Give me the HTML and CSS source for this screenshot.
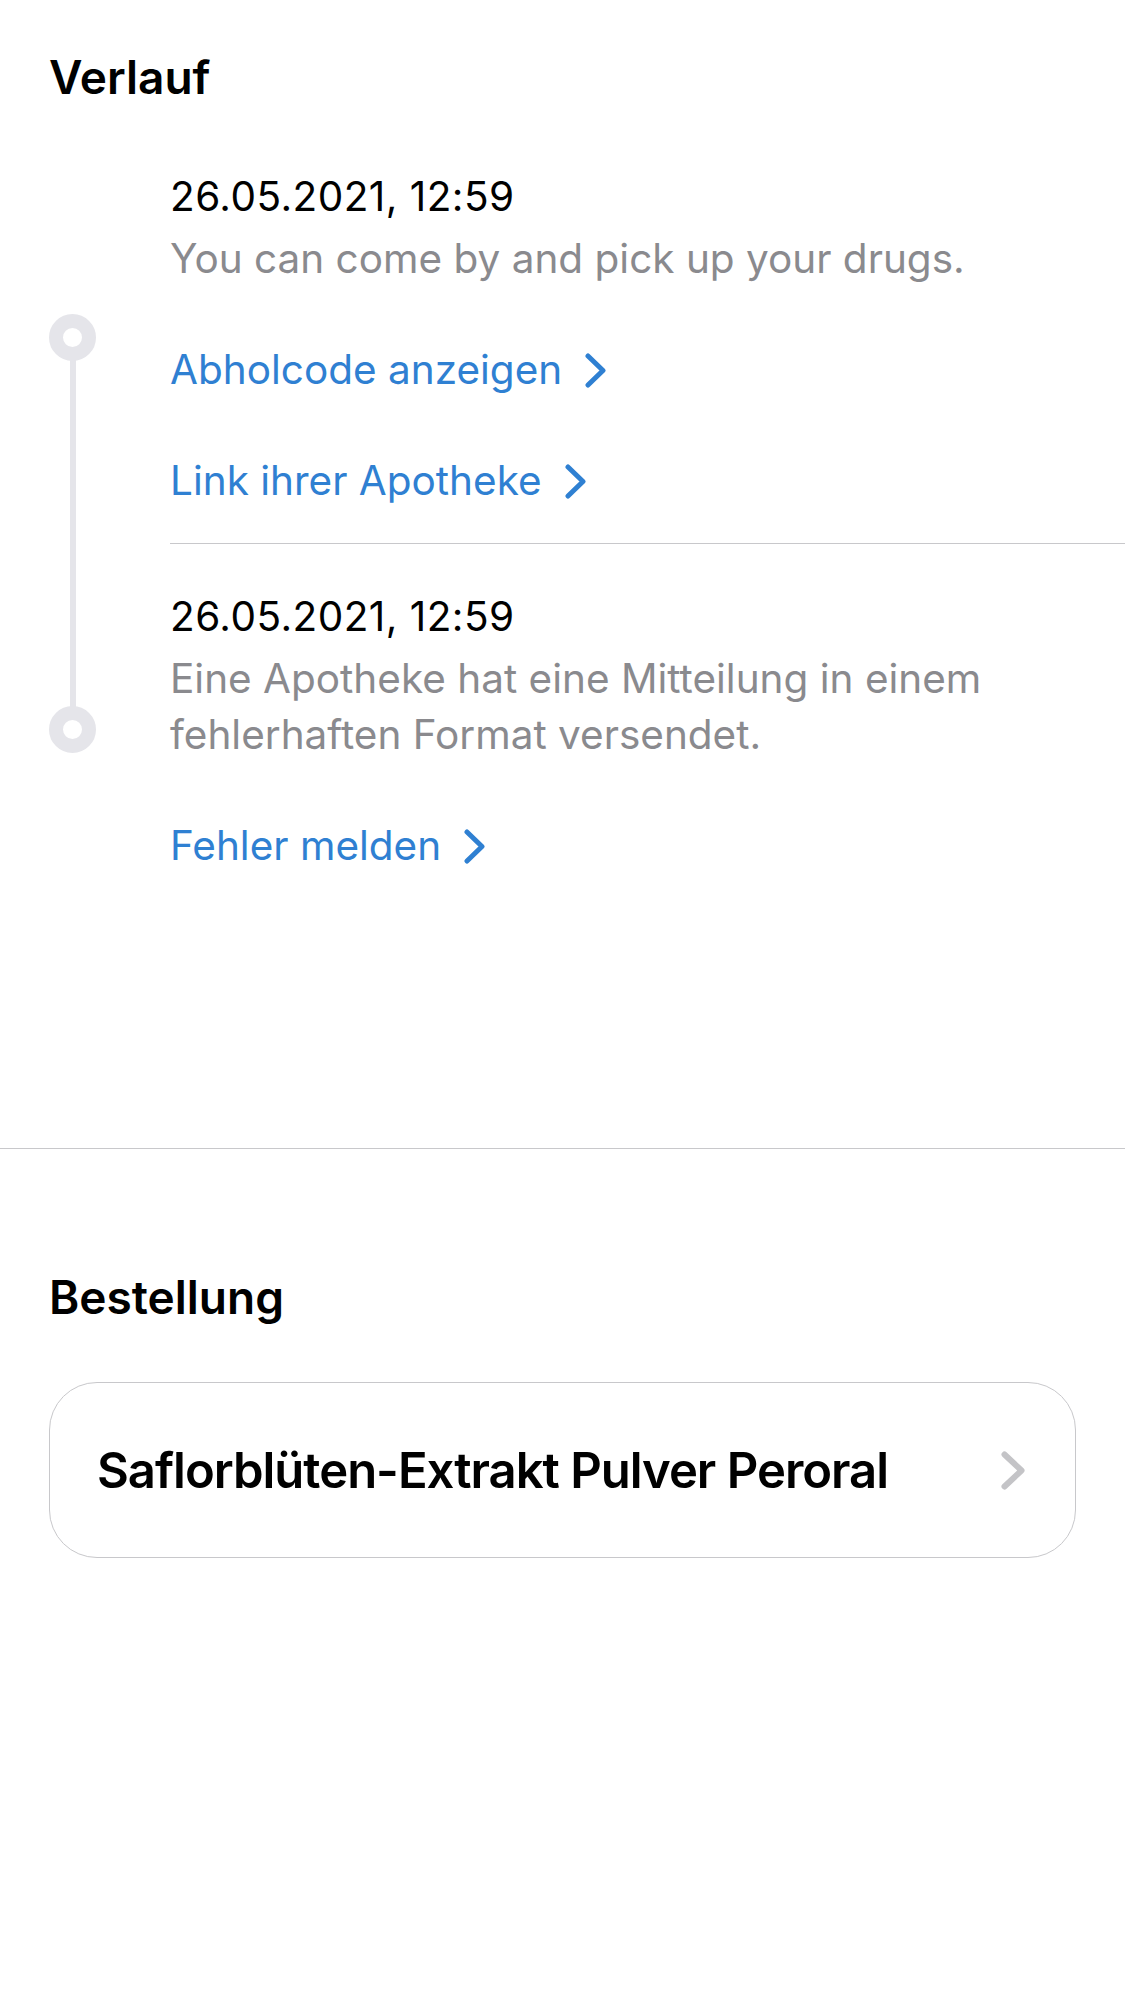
FILE: index.html
```html
<!DOCTYPE html>
<html lang="de">
<head>
<meta charset="utf-8">
<title>Verlauf</title>
<link rel="stylesheet" href="styles.css">
</head>
<body>
<main class="page">
  <section class="history">
    <h2 class="section-title">Verlauf</h2>
    <ol class="timeline">
      <li class="event event--first">
        <div class="marker"><span class="dot"></span></div>
        <div class="event-body event-body--divided">
          <div class="event-text event-text--first">
            <p class="event-date">26.05.2021, 12:59</p>
            <p class="event-desc">You can come by and pick up your drugs.</p>
            <a class="event-link" href="#">Abholcode anzeigen
              <svg class="link-chevron" viewBox="0 0 21 35" width="21" height="35" aria-hidden="true"><path d="M3 3 L18 17.5 L3 32"/></svg>
            </a>
            <a class="event-link" href="#">Link ihrer Apotheke
              <svg class="link-chevron" viewBox="0 0 21 35" width="21" height="35" aria-hidden="true"><path d="M3 3 L18 17.5 L3 32"/></svg>
            </a>
          </div>
        </div>
      </li>
      <li class="event event--last">
        <div class="marker"><span class="dot"></span></div>
        <div class="event-body">
          <div class="event-text event-text--last">
            <p class="event-date">26.05.2021, 12:59</p>
            <p class="event-desc">Eine Apotheke hat eine Mitteilung in einem fehlerhaften Format versendet.</p>
            <a class="event-link" href="#">Fehler melden
              <svg class="link-chevron" viewBox="0 0 21 35" width="21" height="35" aria-hidden="true"><path d="M3 3 L18 17.5 L3 32"/></svg>
            </a>
          </div>
        </div>
      </li>
    </ol>
  </section>

  <section class="order">
    <h2 class="section-title">Bestellung</h2>
    <a class="order-card" href="#">
      <span class="order-name">Saflorblüten-Extrakt Pulver Peroral</span>
      <svg class="card-chevron" viewBox="0 0 24 39" width="24" height="39" aria-hidden="true"><path d="M3.5 3.5 L20.5 19.5 L3.5 35.5"/></svg>
    </a>
  </section>
</main>
</body>
</html>
```
FILE: styles.css
```css
html {
  background: #ffffff;
}

body {
  margin: 0;
  font-family: Inter, "Noto Sans", "Liberation Sans", sans-serif;
  color: #000000;
  background: #ffffff;
}

.page {
  display: flex;
  flex-direction: column;
}

p {
  margin: 0;
}

.section-title {
  margin: 0;
  padding-left: 49px;
  font-size: 46px;
  line-height: 54px;
  font-weight: 600;
  letter-spacing: 0;
}

/* ---------- Verlauf ---------- */
.history {
  padding-top: 50px;
  padding-bottom: 234px;
  border-bottom: 1px solid #c8c8cb;
}

.timeline {
  list-style: none;
  margin: 27px 0 0 0;
  padding: 0 0 0 49px;
  display: flex;
  flex-direction: column;
}

.event {
  display: flex;
  align-items: stretch;
}

.marker {
  position: relative;
  width: 47px;
  flex: 0 0 47px;
  display: flex;
  align-items: center;
  justify-content: center;
}

.marker::before {
  content: "";
  position: absolute;
  left: 50%;
  width: 6px;
  margin-left: -3px;
  background: #e5e5ea;
}

.event--first .marker::before {
  top: 50%;
  bottom: 0;
}

.event--last .marker::before {
  top: 0;
  bottom: 50%;
}

.dot {
  position: relative;
  z-index: 1;
  box-sizing: border-box;
  width: 47px;
  height: 47px;
  border-radius: 50%;
  border: 14.5px solid #e5e5ea;
  background: #ffffff;
}

.event-body {
  flex: 1;
  margin-left: 74px;
}

.event-body--divided {
  border-bottom: 1px solid #c8c8cb;
}

.event-text {
  padding-right: 49px;
  display: flex;
  flex-direction: column;
  align-items: flex-start;
}

.event-text--first {
  padding-top: 38px;
  padding-bottom: 34px;
}

.event-text--last {
  padding-top: 45px;
  padding-bottom: 40px;
}

.event-date {
  font-size: 40.5px;
  line-height: 56px;
  letter-spacing: 0.45px;
  margin-bottom: 6px;
  color: #000000;
}

.event-desc {
  font-size: 40.5px;
  line-height: 56px;
  color: #8a8a8e;
}

.event-link {
  display: flex;
  align-items: center;
  gap: 23px;
  margin-top: 55px;
  font-size: 40.5px;
  line-height: 56px;
  color: #2f80d2;
  text-decoration: none;
}

.link-chevron path {
  fill: none;
  stroke: #2f80d2;
  stroke-width: 5;
  stroke-linecap: round;
  stroke-linejoin: round;
}

/* ---------- Bestellung ---------- */
.order {
  padding-top: 121px;
  padding-bottom: 120px;
}

.order-card {
  margin: 58px 49px 0 49px;
  box-sizing: border-box;
  height: 176px;
  border: 1px solid #c8c8cb;
  border-radius: 48px;
  display: flex;
  align-items: center;
  justify-content: space-between;
  padding: 0 50px 0 47px;
  color: #000000;
  text-decoration: none;
}

.order-name {
  font-size: 49px;
  font-weight: 600;
  letter-spacing: -1px;
}

.card-chevron path {
  fill: none;
  stroke: #c4c4c7;
  stroke-width: 6;
  stroke-linecap: round;
  stroke-linejoin: round;
}
```
